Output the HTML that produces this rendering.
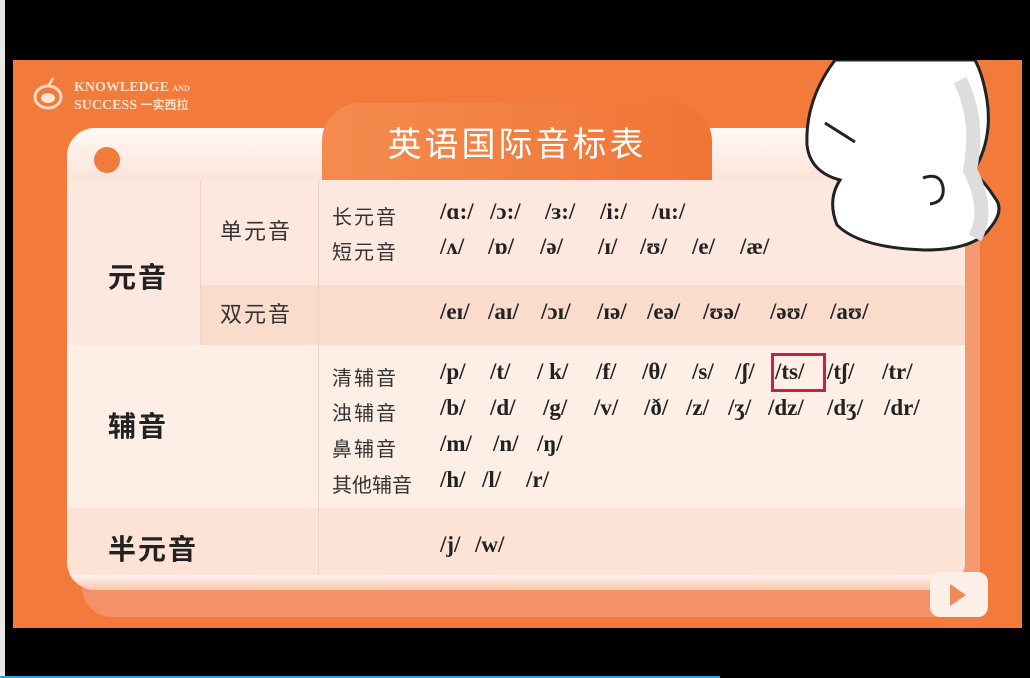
<!DOCTYPE html>
<html><head><meta charset="utf-8"><style>
*{margin:0;padding:0;box-sizing:border-box}
body{width:1030px;height:678px;background:#000;position:relative;overflow:hidden;font-family:"Liberation Sans","Noto Sans CJK SC",sans-serif}
.a{position:absolute}
.or{left:13px;top:60px;width:1009px;height:568px;background:#f27a3a}
.cn{color:#333;font-size:20px;letter-spacing:2px}
.big{color:#222;font-size:28px;font-weight:bold;letter-spacing:2px}
.ph{position:absolute;font-family:"Liberation Serif","DejaVu Serif",serif;font-weight:bold;font-size:23px;color:#222;white-space:pre}
</style></head><body>
<div class="a" style="left:0;top:0;width:5px;height:678px;background:#e8e8e8"></div>
<div class="a or"></div>
<svg class="a" style="left:33px;top:75px" width="40" height="40"><ellipse cx="15" cy="22" rx="13" ry="11" fill="none" stroke="#fbd9c2" stroke-width="3"/><ellipse cx="15" cy="23" rx="7" ry="5" fill="#fbe7d8"/><path d="M16 10 L20 3" stroke="#fbd9c2" stroke-width="2.5"/></svg>
<div class="a" style="left:74px;top:80px;color:#fbe0cc;font-family:'Liberation Serif',serif;font-size:14px;line-height:16px;font-weight:bold">KNOWLEDGE <span style="font-size:8px">AND</span><br>SUCCESS <span style="font-family:'Noto Sans CJK SC';font-size:12px">一实西拉</span></div>
<div class="a" style="left:82px;top:560px;width:885px;height:57px;background:#f5916a;border-radius:0 0 30px 30px"></div>
<div class="a" style="left:965px;top:180px;width:15px;height:420px;background:#f59a6e"></div>
<div class="a" style="left:67px;top:128px;width:898px;height:462px;background:#fdeee6;border-radius:28px;overflow:hidden">
 <div class="a" style="left:0;top:0;width:898px;height:52px;background:linear-gradient(#fff8f4,#fbe4d8)"></div>
 <div class="a" style="left:0;top:52px;width:898px;height:165px;background:#fce8de"></div>
 <div class="a" style="left:133px;top:157px;width:765px;height:60px;background:#fadccd"></div>
 <div class="a" style="left:0;top:380px;width:898px;height:67px;background:#fce3d6"></div>
 <div class="a" style="left:133px;top:52px;width:1px;height:165px;background:#f0d2c2"></div>
 <div class="a" style="left:251px;top:52px;width:1px;height:395px;background:#f0d2c2"></div>
 <div class="a" style="left:0;top:447px;width:898px;height:15px;background:linear-gradient(#fff4ee,#f8c6ad)"></div>
</div>
<div class="a" style="left:94px;top:147px;width:26px;height:26px;border-radius:50%;background:#f27a3a"></div>
<div class="a" style="left:322px;top:103px;width:390px;height:77px;border-radius:38px 38px 0 0;background:linear-gradient(90deg,#f58b4f,#f07535);color:#fff;font-size:34px;text-align:center;line-height:84px;letter-spacing:3px">英语国际音标表</div>
<div class="a big" style="left:108px;top:256px">元音</div>
<div class="a big" style="left:108px;top:405px">辅音</div>
<div class="a big" style="left:108px;top:528px">半元音</div>
<div class="a cn" style="left:220px;top:214px;font-size:22px">单元音</div>
<div class="a cn" style="left:220px;top:297px;font-size:22px">双元音</div>
<div class="a cn" style="left:332px;top:201px">长元音</div>
<div class="a cn" style="left:332px;top:236px">短元音</div>
<div class="a cn" style="left:332px;top:362px">清辅音</div>
<div class="a cn" style="left:332px;top:397px">浊辅音</div>
<div class="a cn" style="left:332px;top:433px">鼻辅音</div>
<div class="a cn" style="left:332px;top:469px;letter-spacing:0">其他辅音</div>

<div style="position:absolute;left:0;top:199px">
<span class="ph" style="left:440px">/ɑ:/</span><span class="ph" style="left:490px">/ɔ:/</span><span class="ph" style="left:545px">/ɜ:/</span><span class="ph" style="left:600px">/i:/</span><span class="ph" style="left:652px">/u:/</span></div>
<div style="position:absolute;left:0;top:234px">
<span class="ph" style="left:440px">/ʌ/</span><span class="ph" style="left:488px">/ɒ/</span><span class="ph" style="left:540px">/ə/</span><span class="ph" style="left:598px">/ɪ/</span><span class="ph" style="left:640px">/ʊ/</span><span class="ph" style="left:692px">/e/</span><span class="ph" style="left:740px">/æ/</span></div>
<div style="position:absolute;left:0;top:299px">
<span class="ph" style="left:440px">/eɪ/</span><span class="ph" style="left:488px">/aɪ/</span><span class="ph" style="left:541px">/ɔɪ/</span><span class="ph" style="left:597px">/ɪə/</span><span class="ph" style="left:647px">/eə/</span><span class="ph" style="left:703px">/ʊə/</span><span class="ph" style="left:770px">/əʊ/</span><span class="ph" style="left:830px">/aʊ/</span></div>
<div style="position:absolute;left:0;top:359px">
<span class="ph" style="left:440px">/p/</span><span class="ph" style="left:490px">/t/</span><span class="ph" style="left:537px">/ k/</span><span class="ph" style="left:596px">/f/</span><span class="ph" style="left:642px">/θ/</span><span class="ph" style="left:692px">/s/</span><span class="ph" style="left:735px">/ʃ/</span><span class="ph" style="left:775px">/ts/</span><span class="ph" style="left:827px">/tʃ/</span><span class="ph" style="left:882px">/tr/</span></div>
<div style="position:absolute;left:0;top:395px">
<span class="ph" style="left:440px">/b/</span><span class="ph" style="left:490px">/d/</span><span class="ph" style="left:543px">/g/</span><span class="ph" style="left:594px">/v/</span><span class="ph" style="left:644px">/ð/</span><span class="ph" style="left:686px">/z/</span><span class="ph" style="left:728px">/ʒ/</span><span class="ph" style="left:768px">/dz/</span><span class="ph" style="left:827px">/dʒ/</span><span class="ph" style="left:884px">/dr/</span></div>
<div style="position:absolute;left:0;top:431px">
<span class="ph" style="left:440px">/m/</span><span class="ph" style="left:493px">/n/</span><span class="ph" style="left:537px">/ŋ/</span></div>
<div style="position:absolute;left:0;top:467px">
<span class="ph" style="left:440px">/h/</span><span class="ph" style="left:482px">/l/</span><span class="ph" style="left:526px">/r/</span></div>
<div style="position:absolute;left:0;top:532px">
<span class="ph" style="left:440px">/j/</span><span class="ph" style="left:475px">/w/</span></div>
<div class="a" style="left:771px;top:353px;width:55px;height:39px;border:3px solid #c8204a"></div>

<svg class="a" style="left:795px;top:60px" width="225" height="195">
<path d="M40 0 Q10 40 12 85 Q15 112 45 120 Q32 140 42 165 Q65 188 130 190 Q180 190 195 168 Q210 150 200 138 Q190 122 178 112 Q198 80 192 40 Q188 15 180 0 Z" fill="#fff" stroke="#222" stroke-width="3"/>
<path d="M165 20 Q185 60 175 110 Q195 150 180 178" stroke="#ddd" stroke-width="14" fill="none"/>
<path d="M30 63 L60 82" stroke="#222" stroke-width="3"/>
<path d="M128 118 Q145 112 148 127 Q150 142 135 144" stroke="#222" stroke-width="3" fill="none"/>
</svg>
<div class="a" style="left:930px;top:572px;width:58px;height:45px;border-radius:10px;background:#fcefe8"></div>
<div class="a" style="left:950px;top:584px;width:0;height:0;border-left:16px solid #f08a5a;border-top:11px solid transparent;border-bottom:11px solid transparent"></div>
<div class="a" style="left:0;top:676px;width:720px;height:2px;background:#2aa4dd"></div>
</body></html>
